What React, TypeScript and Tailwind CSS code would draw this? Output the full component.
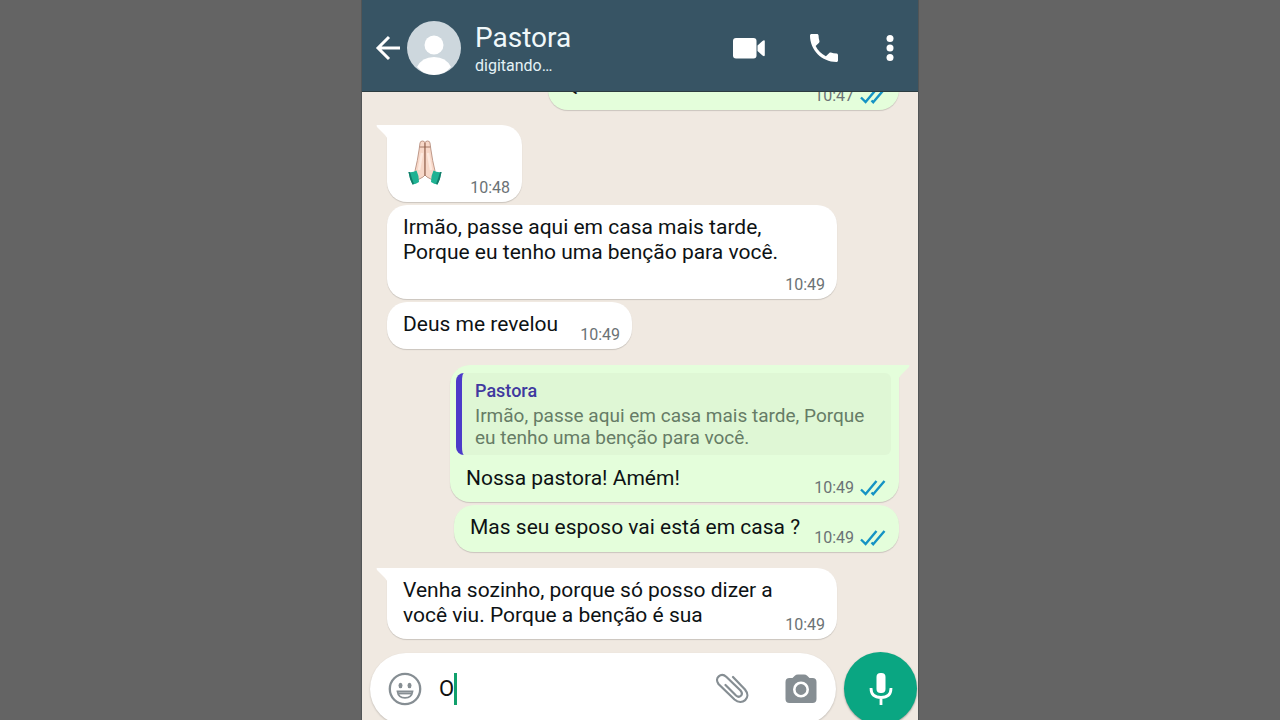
import type { ReactNode } from 'react';

const ReadTicks = () => (
	<svg viewBox="0 0 26 18" className="w-[26px] h-[18px]" fill="none" strokeWidth="2.4" aria-hidden="true">
		<path d="M1 10.5 5.6 15 16.5 2" stroke="#1593c4" />
		<path d="M11.5 13.5 13.2 15.2 24.5 2" stroke="#1593c4" />
	</svg>
);

const PrayingHands = () => (
	<svg viewBox="0 0 34 46" className="w-[34px] h-[46px]" role="img" aria-label="Mãos em oração">
		<g stroke="#b08472" strokeWidth=".8" strokeLinejoin="round">
			<path d="M12 3q.3-2 2.400-2 2.300 0 2.600 2V35l-2 2L9.500 40 7 31Q9.500 21 11.200 9Z" fill="#f7d8c9" />
			<path d="M22 3q-.3-2-2.400-2-2.300 0-2.600 2V35l2 2L24.500 40 27 31Q24.500 21 22.800 9Z" fill="#f7d8c9" />
			<path d="M11.800 7h10.400M17 3v33" stroke="#8f5f4d" />
		</g>
		<path d="M14 13 11 30M20 13l3 17" stroke="#fdeae0" strokeWidth="2.500" />
		<path d="M.5 32q4.500.6 8-1.500 2.500 5 2.500 11.500-3 2-6.500 2.500Q1.500 39 .5 32Z" fill="#1fb293" />
		<path d="M33.500 32q-4.500.6-8-1.500-2.500 5-2.500 11.500 3 2 6.500 2.500Q32.500 39 33.500 32Z" fill="#1fb293" />
		<path d="M.5 32q1 7 4 12.500l1.500-.5Q3.500 38 2 32ZM33.500 32q-1 7-4 12.500l-1.500-.5Q30.500 38 32 32Z" fill="#147c69" />
	</svg>
);

const Time = ({ value, read }: { value: string; read?: boolean }) => (
	<div className="flex items-center gap-1.5 self-end h-5 shrink-0 text-[16px] leading-5 text-[#6b7275]">
		<time>{value}</time>
		{read && <ReadTicks />}
	</div>
);

type BubbleProps = {
	children: ReactNode;
	sent?: boolean;
	tail?: boolean;
	className?: string;
};

const Bubble = ({ children, sent, tail, className = '' }: BubbleProps) => (
	<div
		className={`relative flex rounded-[20px] pb-1 shadow-[0_1px_1px_rgba(0,0,0,0.16)] ${
			sent ? 'self-end bg-[#e4fedb] pr-[13px]' : 'self-start bg-white pr-3 pl-4'
		} ${tail ? (sent ? 'rounded-tr-none' : 'rounded-tl-none') : ''} ${className}`}
	>
		{tail && (
			<svg
				viewBox="0 0 12 16"
				className={`absolute top-0 w-3 h-4 ${sent ? '-right-[11px] -scale-x-100 fill-[#e4fedb]' : '-left-[11px] fill-white'}`}
				aria-hidden="true"
			>
				<path d="M1 0h11v16Q11 12 9 10L1 2Q0 0 1 0Z" />
			</svg>
		)}
		{children}
	</div>
);

const Header = () => (
	<header className="relative z-10 flex items-center shrink-0 h-[92px] pt-1 pl-3 pr-6 bg-[#375464] border-b border-[#2c3c40] text-white">
		<button type="button" aria-label="Voltar" className="w-7 shrink-0">
			<svg viewBox="0 0 28 28" className="w-7 h-7" fill="none" stroke="currentColor" strokeWidth="3">
				<path d="M26 14H4M15 3 4 14l11 11" />
			</svg>
		</button>
		<svg viewBox="0 0 54 54" className="w-[54px] h-[54px] ml-[5px] shrink-0 rounded-full bg-[#cdd7dd]" fill="#fff" aria-hidden="true">
			<circle cx="27" cy="24" r="9.500" />
			<path d="M10 46q5-10 17-10t17 10q-7 8-17 8t-17-8Z" />
		</svg>
		<div className="flex-1 min-w-0 ml-3.5 pt-1">
			<h1 className="text-[28px] leading-8 text-[#f0f8fa]">Pastora</h1>
			<p className="text-[16px] leading-6 text-[#e4f2f6]">digitando…</p>
		</div>
		<div className="flex items-center">
			<button type="button" aria-label="Chamada de vídeo" className="mr-[45px]">
				<svg viewBox="0 0 32 22" className="w-8 h-[22px]" fill="currentColor">
					<rect x="0" y="1" width="23.500" height="20.500" rx="3" />
					<path d="M24.500 8.500 29.500 4Q31.800 2.500 31.800 4.500v13.500q0 2-2.300.5L24.500 14Z" />
				</svg>
			</button>
			<button type="button" aria-label="Chamada de voz" className="mr-12">
				<svg viewBox="3 3 18 18" className="w-7 h-7" fill="currentColor">
					<path d="M6.620 10.790c1.440 2.830 3.760 5.140 6.590 6.590l2.200-2.200c.27-.27.67-.36 1.020-.24 1.120.37 2.330.57 3.570.57.55 0 1 .45 1 1V20c0 .55-.45 1-1 1-9.390 0-17-7.610-17-17 0-.55.45-1 1-1h3.500c.55 0 1 .45 1 1 0 1.250.2 2.450.57 3.570.11.35.03.74-.25 1.020l-2.200 2.200z" />
				</svg>
			</button>
			<button type="button" aria-label="Mais opções">
				<svg viewBox="0 0 8 26" className="w-2 h-[26px]" fill="currentColor">
					<circle cx="4" cy="3.500" r="3.500" />
					<circle cx="4" cy="13" r="3.500" />
					<circle cx="4" cy="22.500" r="3.500" />
				</svg>
			</button>
		</div>
	</header>
);

const Messages = () => (
	<main className="flex flex-col justify-end flex-1 min-h-0 overflow-hidden pl-[25px] pr-[19px] pb-3.5 text-[21px] leading-[25px] text-[#0d1214]">
		<Bubble sent className="justify-between w-[351px] pl-4">
			<p className="pt-2.5 pb-2">Q</p>
			<Time value="10:47" read />
		</Bubble>
		<Bubble tail className="mt-[15px] w-[135px] justify-between">
			<div className="pt-[15px] pl-[5px] pb-3">
				<PrayingHands />
			</div>
			<Time value="10:48" />
		</Bubble>
		<Bubble className="mt-[3px] w-[450px] flex-col">
			<p className="pt-2.5 pb-2.5">
				Irmão, passe aqui em casa mais tarde,
				<br />
				Porque eu tenho uma benção para você.
			</p>
			<Time value="10:49" />
		</Bubble>
		<Bubble className="mt-[3px] w-[245px] justify-between">
			<p className="pt-2.5 pb-2">Deus me revelou</p>
			<Time value="10:49" />
		</Bubble>
		<Bubble sent tail className="mt-4 w-[449px] flex-col">
			<blockquote className="ml-1.5 -mr-[5px] mt-2 pt-1.5 pb-1.5 pl-[13px] border-l-[6px] border-[#4c3bc9] rounded-l-lg rounded-r-md bg-[#dff7d5] text-[19px] leading-[22px] text-[#667c66]">
				<p className="text-[18px] leading-6 font-medium text-[#40399f]">Pastora</p>
				<p className="mt-[2px]">
					Irmão, passe aqui em casa mais tarde, Porque
					<br />
					eu tenho uma benção para você.
				</p>
			</blockquote>
			<div className="flex justify-between pl-4">
				<p className="pt-[11px] pb-[7px]">Nossa pastora! Amém!</p>
				<Time value="10:49" read />
			</div>
		</Bubble>
		<Bubble sent className="mt-[3px] w-[445px] justify-between pl-4">
			<p className="pt-2.5 pb-2">Mas seu esposo vai está em casa ?</p>
			<Time value="10:49" read />
		</Bubble>
		<Bubble tail className="mt-4 w-[450px] justify-between">
			<p className="pt-2.5 pb-[7px]">
				Venha sozinho, porque só posso dizer a
				<br />
				você viu. Porque a benção é sua
			</p>
			<Time value="10:49" />
		</Bubble>
	</main>
);

const Composer = () => (
	<footer className="flex items-start shrink-0 h-[67px] pl-2 gap-2">
		<div className="flex items-center flex-1 h-[72px] pl-[18px] pr-[19px] rounded-full bg-white shadow-[0_1px_2px_rgba(0,0,0,0.2)] text-[#868e93]">
			<button type="button" aria-label="Emoji" className="mr-[17px]">
				<svg viewBox="0 0 34 34" className="w-[34px] h-[34px]" fill="none" stroke="currentColor" strokeWidth="2.300">
					<circle cx="17" cy="17" r="15.200" />
					<ellipse cx="12.500" cy="13.500" rx="2" ry="2.700" fill="currentColor" stroke="none" />
					<ellipse cx="21.500" cy="13.500" rx="2" ry="2.700" fill="currentColor" stroke="none" />
					<path d="M9.500 19.500h15q-.8 6.300-7.500 6.300t-7.500-6.300Z" strokeWidth="1.800" />
					<path d="M10.500 21.500h13" strokeWidth="1.800" />
				</svg>
			</button>
			<label className="flex items-center flex-1">
				<span className="sr-only">Mensagem</span>
				<input type="text" defaultValue="O" className="field-sizing-content text-[22px] leading-8 text-[#111] outline-none" />
				<span className="w-[3px] h-8 bg-[#10a06c]" />
			</label>
			<button type="button" aria-label="Anexar" className="mr-9">
				<svg viewBox="0 0 34 32" className="w-[34px] h-8" fill="none" stroke="currentColor" strokeWidth="2.200" strokeLinecap="round">
					<path d="M18 4 30 16.500C37 25 27 33 19.500 26.500L3.500 11C-1 5 6 -1 11.500 4L25.500 17.500C29 22 24.500 25.500 21 22.500L10.500 12" />
				</svg>
			</button>
			<button type="button" aria-label="Câmera">
				<svg viewBox="0 0 32 30" className="w-8 h-[30px]" fill="currentColor">
					<path d="M13 .5h6q2 0 3.200 1.200L24.500 4h3Q31.500 4 31.500 8v17q0 4-4 4h-23q-4 0-4-4V8q0-4 4-4h3l2.300-2.300Q11 .5 13 .5Z" />
					<circle cx="16" cy="15.500" r="6.700" stroke="#fff" strokeWidth="2.600" />
				</svg>
			</button>
		</div>
		<button type="button" aria-label="Gravar áudio" className="flex items-center justify-center w-[73px] h-[73px] -mt-px mr-px rounded-full bg-[#0aa682] text-white shrink-0 shadow-[0_1px_2px_rgba(0,0,0,0.35)]">
			<svg viewBox="0 0 24 34" className="w-6 h-[34px]" fill="none" stroke="currentColor" strokeWidth="2.800">
				<rect x="7.500" y="1" width="9" height="20" rx="4" fill="currentColor" stroke="none" />
				<path d="M2 16q0 9.500 10 9.500t10-9.500M12 25v8" />
			</svg>
		</button>
	</footer>
);

const App = () => {
	return (
		<div className="flex justify-center h-screen overflow-hidden bg-[#646464] font-[Roboto,sans-serif]">
			<div className="flex flex-col w-full max-w-[556px] bg-[#f0e9e1] shadow-[0_0_0_1px_#525556]">
				<Header />
				<Messages />
				<Composer />
			</div>
		</div>
	);
};

export default App;
